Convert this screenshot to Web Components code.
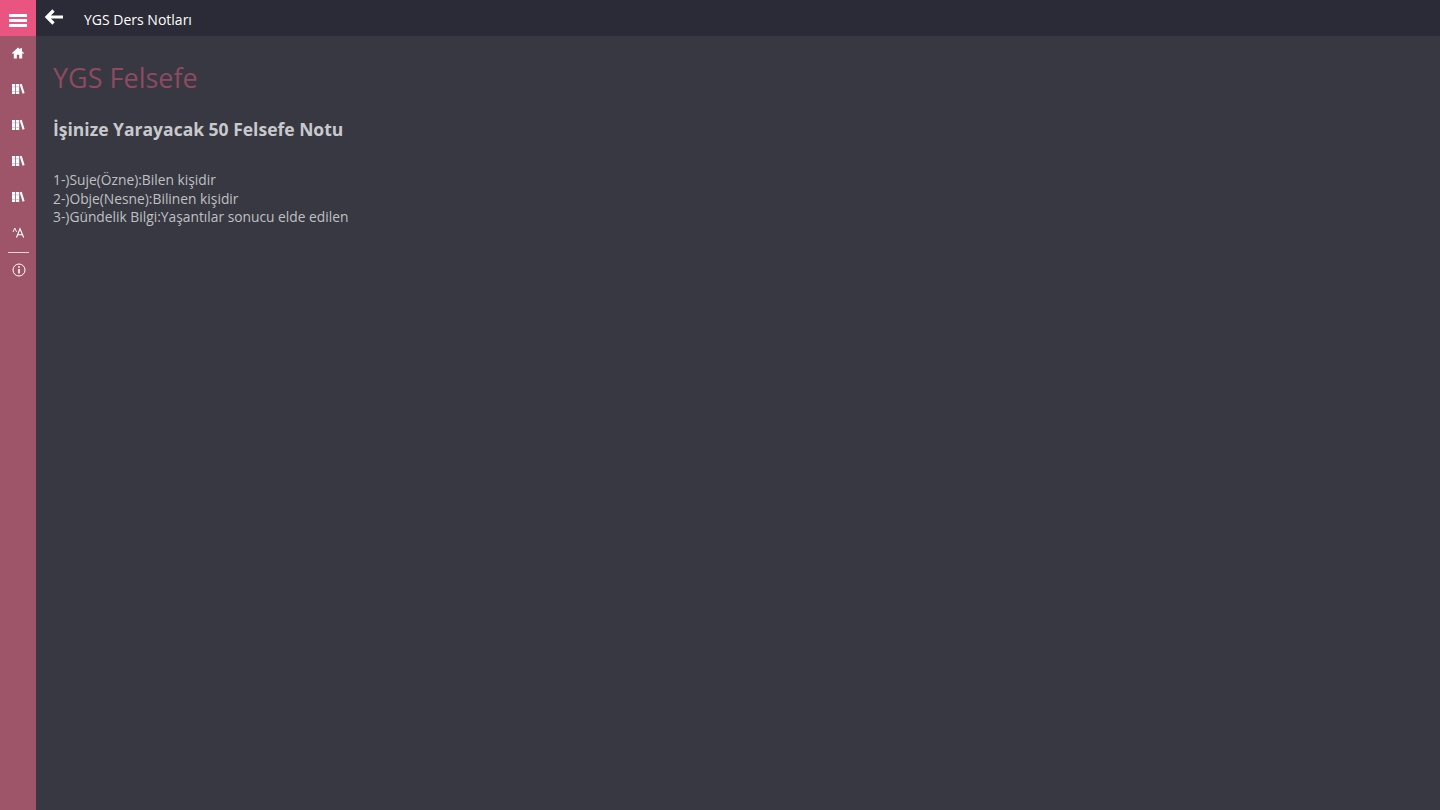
<!DOCTYPE html>
<html lang="tr">
<head>
<meta charset="utf-8">
<title>YGS Felsefe</title>
<style>
  html, body { margin: 0; height: 100%; }
  body { font-family: "Open Sans", "Noto Sans", sans-serif; background: #373841; overflow: hidden; }
</style>
</head>
<body>
<app-shell>
  <side-nav slot="nav"></side-nav>
  <top-bar slot="bar" heading="YGS Ders Notları"></top-bar>
  <note-page heading="YGS Felsefe" subheading="İşinize Yarayacak 50 Felsefe Notu">
    <div>1-)Suje(Özne):Bilen kişidir</div>
    <div>2-)Obje(Nesne):Bilinen kişidir</div>
    <div>3-)Gündelik Bilgi:Yaşantılar sonucu elde edilen</div>
  </note-page>
</app-shell>

<script>
const ICONS = {
  home: '<path d="M6 .6 0 6l.8.9L1.800 6v5.400h3V7.800h2.400v3.600h3V6l1 .9.800-.9-2-1.800V1.200H8.300v1.200z"/>',
  books: '<path d="M0 1h3.200v10H0zM4 1h3.200v10H4zM7.700 1.600 9.700.8 12.600 10l-2 .8z"/><path fill="#d9b9c6" d="M0 3.400h3.200v.8H0zM4 3.400h3.200v.8H4zM0 8.200h3.200V9H0zM4 8.200h3.200V9H4z"/>'
};

class AppShell extends HTMLElement {
  connectedCallback() {
    this.attachShadow({ mode: 'open' });
    this.shadowRoot.innerHTML = `
      <style>
        :host { display: grid; grid-template-columns: 36px 1fr; grid-template-rows: 36px 1fr; height: 810px; }
        ::slotted(side-nav) { grid-row: 1 / 3; }
      </style>
      <slot name="nav"></slot>
      <slot name="bar"></slot>
      <slot></slot>
    `;
  }
}

class SideNav extends HTMLElement {
  connectedCallback() {
    this.attachShadow({ mode: 'open' });
    const item = svg => `<div class="item">${svg}</div>`;
    const books = `<svg width="13" height="12" viewBox="0 0 13 12" fill="#fff">${ICONS.books}</svg>`;
    this.shadowRoot.innerHTML = `
      <style>
        :host { display: flex; flex-direction: column; background: #9e556a; }
        .burger { height: 36px; background: #ea5480; display: flex; align-items: center; justify-content: center; }
        .burger svg { margin-top: 4px; }
        .item { height: 36px; box-sizing: border-box; padding-bottom: 3px; display: flex; align-items: center; justify-content: center; }
        .rule { height: 1px; background: #e4d3d9; margin: 0 7px 0 8px; }
        .item.info { height: 35px; padding: 0 0 1px 1px; }
      </style>
      <div class="burger">
        <svg width="18" height="13" viewBox="0 0 18 13" fill="#fff">
          <rect y="0" width="18" height="3"/><rect y="5" width="18" height="3"/><rect y="10" width="18" height="3"/>
        </svg>
      </div>
      ${item(`<svg width="12" height="12" viewBox="0 0 12 12" fill="#fff">${ICONS.home}</svg>`)}
      ${item(books)}${item(books)}${item(books)}${item(books)}
      ${item(`<svg width="13" height="12" viewBox="0 0 13 12" fill="none" stroke="#fff"><path d="M1 5 2.800 1 4.600 5" stroke-width=".9"/><path d="M4.500 10.500 8 1.800 11.700 10.500M5.800 7.800h4.600" stroke-width="1.100"/></svg>`)}
      <div class="rule"></div>
      <div class="item info">
        <svg width="14" height="14" viewBox="0 0 14 14" fill="none" stroke="#fff"><circle cx="7" cy="7" r="6"/><path d="M7 6v4.500" stroke-width="1.600"/><path d="M7 3.200v1.500" stroke-width="1.600"/></svg>
      </div>
    `;
  }
}

class TopBar extends HTMLElement {
  connectedCallback() {
    this.attachShadow({ mode: 'open' });
    this.shadowRoot.innerHTML = `
      <style>
        :host { display: flex; align-items: center; background: #2a2b36; color: #fff; height: 36px; }
        svg { margin: 0 0 2px 8px; flex: none; }
        span { margin: 2px 0 0 20px; font-size: 14px; }
      </style>
      <svg width="20" height="16" viewBox="0 0 20 16" fill="none" stroke="#fff" stroke-width="3.200">
        <path d="M9.500 1.500 3 8l6.500 6.500M3 8h16"/>
      </svg>
      <span>${this.getAttribute('heading')}</span>
    `;
  }
}

class NotePage extends HTMLElement {
  connectedCallback() {
    this.attachShadow({ mode: 'open' });
    this.shadowRoot.innerHTML = `
      <style>
        :host { display: block; padding: 20px 17px; color: #bfc0c4; }
        h1 { margin: 0; font-size: 27px; line-height: 44px; font-weight: 400; color: #8e4a60; }
        h2 { margin: 16px 0 0; font-size: 17.500px; line-height: 27px; font-weight: 700; color: #c8c9cc; }
        .body { margin-top: 28px; font-size: 13.800px; line-height: 18.500px; }
      </style>
      <h1>${this.getAttribute('heading')}</h1>
      <h2>${this.getAttribute('subheading')}</h2>
      <div class="body"><slot></slot></div>
    `;
  }
}

customElements.define('app-shell', AppShell);
customElements.define('side-nav', SideNav);
customElements.define('top-bar', TopBar);
customElements.define('note-page', NotePage);
</script>
</body>
</html>
